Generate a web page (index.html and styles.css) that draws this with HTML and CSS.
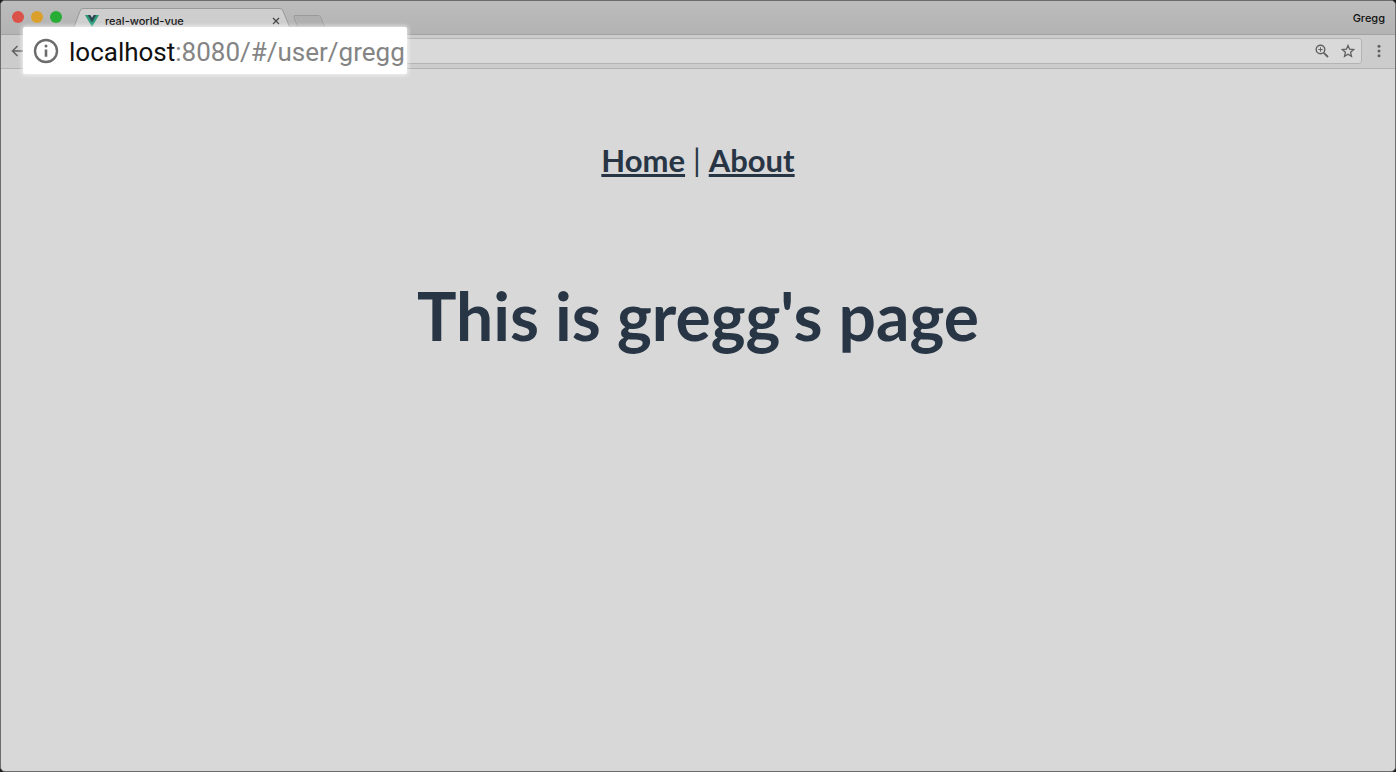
FILE: index.html
```html
<!DOCTYPE html>
<html lang="en">
<head>
<meta charset="utf-8">
<meta name="viewport" content="width=device-width, initial-scale=1">
<title>real-world-vue</title>
<link rel="stylesheet" href="styles.css">
</head>
<body>
<div class="window">
  <header class="tab-strip">
    <div class="lights">
      <button class="light light-close" aria-label="Close window"></button>
      <button class="light light-minimize" aria-label="Minimize window"></button>
      <button class="light light-zoom" aria-label="Zoom window"></button>
    </div>
    <div class="tab">
      <svg class="tab-shape" viewBox="0 0 222 27" aria-hidden="true"><path d="M0 27 L9 3 Q10 .5 12 .5 H209 Q211 .5 212 3 L222 27" fill="#cecece" stroke="#999"/></svg>
      <svg class="favicon" viewBox="0 0 14 12" aria-hidden="true"><path d="M0 0h14L7 12z" fill="#2c9c7c"/><path d="M2.8 0h8.400L7 7.200z" fill="#2b4450"/><path d="M5.300 0h3.400L7 2.800z" fill="#cecece"/></svg>
      <span class="tab-title">real-world-vue</span>
      <button class="tab-close" aria-label="Close tab"><svg viewBox="0 0 8 8"><path d="M1 1l6 6M7 1L1 7" fill="none" stroke="#444" stroke-width="1.300"/></svg></button>
    </div>
    <button class="new-tab" aria-label="New tab"><svg viewBox="0 0 32 13"><path d="M2 .5H25Q27 .5 27.500 2L32 13M5 13L1 2Q.8 .5 2 .5" fill="none" stroke="#999"/><path d="M2 1H26L31 13H6Z" fill="#afafaf"/></svg></button>
    <button class="profile">Gregg</button>
  </header>
  <div class="toolbar">
    <button class="tool" aria-label="Back"><svg class="back-icon" viewBox="0 0 14 12"><path d="M14 6H1.500M6.500 1L1.500 6l5 5" fill="none" stroke="#616161" stroke-width="1.500"/></svg></button>
    <div class="omnibox">
      <input class="address" type="text" aria-label="Address">
      <button class="tool" aria-label="Zoom page"><svg class="tool-icon" viewBox="0 0 14 14"><g fill="none" stroke="#616161"><circle cx="5.500" cy="5.500" r="4.300" stroke-width="1.400"/><path d="M8.800 8.800L13 13" stroke-width="1.800"/><path d="M3.300 5.500h4.400M5.500 3.300v4.400" stroke-width="1"/></g></svg></button>
      <button class="tool" aria-label="Bookmark"><svg class="tool-icon" viewBox="0 0 14 14"><path d="M7 1.500L8.600 5.200 12.700 5.600 9.600 8.300 10.500 12.300 7 10.200 3.500 12.300 4.400 8.300 1.300 5.600 5.400 5.200Z" fill="none" stroke="#616161" stroke-width="1.300"/></svg></button>
    </div>
    <button class="tool" aria-label="Menu"><svg class="menu-icon" viewBox="0 0 4 14"><g fill="#616161"><circle cx="2" cy="2.200" r="1.500"/><circle cx="2" cy="7" r="1.500"/><circle cx="2" cy="11.800" r="1.500"/></g></svg></button>
  </div>
  <div class="callout">
    <svg class="info-icon" viewBox="0 0 26 26" aria-hidden="true"><circle cx="13" cy="13" r="11" fill="none" stroke="#6c6c6c" stroke-width="2.400"/><path d="M13 11.500v7.200" stroke="#6c6c6c" stroke-width="2.600"/><circle cx="13" cy="8" r="1.500" fill="#6c6c6c"/></svg>
    <span class="url"><span class="host">localhost</span>:8080/#/user/gregg</span>
  </div>
  <main class="page">
    <nav class="nav"><a href="#/">Home</a> | <a href="#/about">About</a></nav>
    <h1 class="heading">This is gregg's page</h1>
  </main>
</div>
</body>
</html>
```
FILE: styles.css
```css
* { box-sizing: border-box; }
body { margin: 0; background: #1c1c1c; }
button { display: flex; align-items: center; justify-content: center; padding: 0; border: 0; background: none; color: inherit; font: inherit; }
svg { display: block; }

.window {
  position: relative;
  display: flex;
  flex-direction: column;
  min-height: 100vh;
  overflow: hidden;
  border: 1px solid #6c6c6c;
  border-radius: 5px;
  background: #d8d8d8;
  font-family: Inter, "Liberation Sans", sans-serif;
}

.tab-strip {
  display: flex;
  align-items: flex-end;
  height: 33px;
  padding: 0 10px 0 11px;
  background: linear-gradient(#bcbcbc, #b3b3b3);
}
.lights { display: flex; gap: 7px; padding-bottom: 11px; }
.light { width: 12px; height: 12px; border-radius: 50%; }
.light-close { background: #db5249; }
.light-minimize { background: #dba02c; }
.light-zoom { background: #27ad36; }

.tab {
  position: relative;
  display: flex;
  align-items: center;
  width: 222px;
  height: 26px;
  margin-left: 9px;
  padding: 0 13px 0 14px;
}
.tab-shape { position: absolute; left: 0; top: 0; width: 222px; height: 27px; }
.favicon { position: relative; width: 14px; height: 12px; }
.tab-title { position: relative; flex: 1; margin-left: 6px; color: #111; font-size: 11px; font-weight: 500; line-height: 16px; }
.tab-close { position: relative; width: 8px; height: 8px; }
.tab-close svg { width: 8px; height: 8px; }
.new-tab { margin-bottom: 6px; }
.new-tab svg { width: 32px; height: 13px; }
.profile { margin-left: auto; margin-bottom: 8px; color: #111; font-size: 11px; font-weight: 500; line-height: 16px; }

.toolbar {
  display: flex;
  align-items: center;
  gap: 12px;
  height: 35px;
  padding: 0 14px 2px 10px;
  border-top: 1px solid #a3a3a3;
  border-bottom: 1px solid #b2b2b2;
  background: #cccccc;
}
.back-icon { width: 14px; height: 12px; }
.tool-icon { width: 14px; height: 14px; }
.menu-icon { width: 4px; height: 14px; }
.omnibox {
  display: flex;
  flex: 1;
  align-items: center;
  gap: 12px;
  height: 26px;
  margin-right: 3px;
  padding-right: 6px;
  border: 1px solid #b4b4b4;
  border-radius: 3px;
  background: #d9d9d9;
}
.address { flex: 1; min-width: 0; border: 0; outline: 0; background: none; font: inherit; }

.callout {
  position: absolute;
  left: 22px;
  top: 26px;
  display: flex;
  align-items: center;
  gap: 10px;
  height: 47px;
  padding: 0 2px 0 10px;
  border-radius: 2px;
  background: #fff;
  box-shadow: 0 0 4px 1px rgba(255, 255, 255, .7);
}
.info-icon { width: 26px; height: 26px; }
.url { padding-top: 2px; color: #848484; font-family: Roboto, sans-serif; font-size: 26px; line-height: 32px; white-space: nowrap; }
.host { color: #111; }

.page { padding: 69px 20px; color: #283545; font-family: Lato, sans-serif; text-align: center; }
.nav { font-size: 31px; line-height: 44px; }
.nav a { color: inherit; font-weight: 700; text-decoration-thickness: 3px; text-underline-offset: 2px; text-decoration-skip-ink: none; }
.heading { margin: 96px 0 0; font-size: 66px; font-weight: 700; line-height: 76px; }
```
